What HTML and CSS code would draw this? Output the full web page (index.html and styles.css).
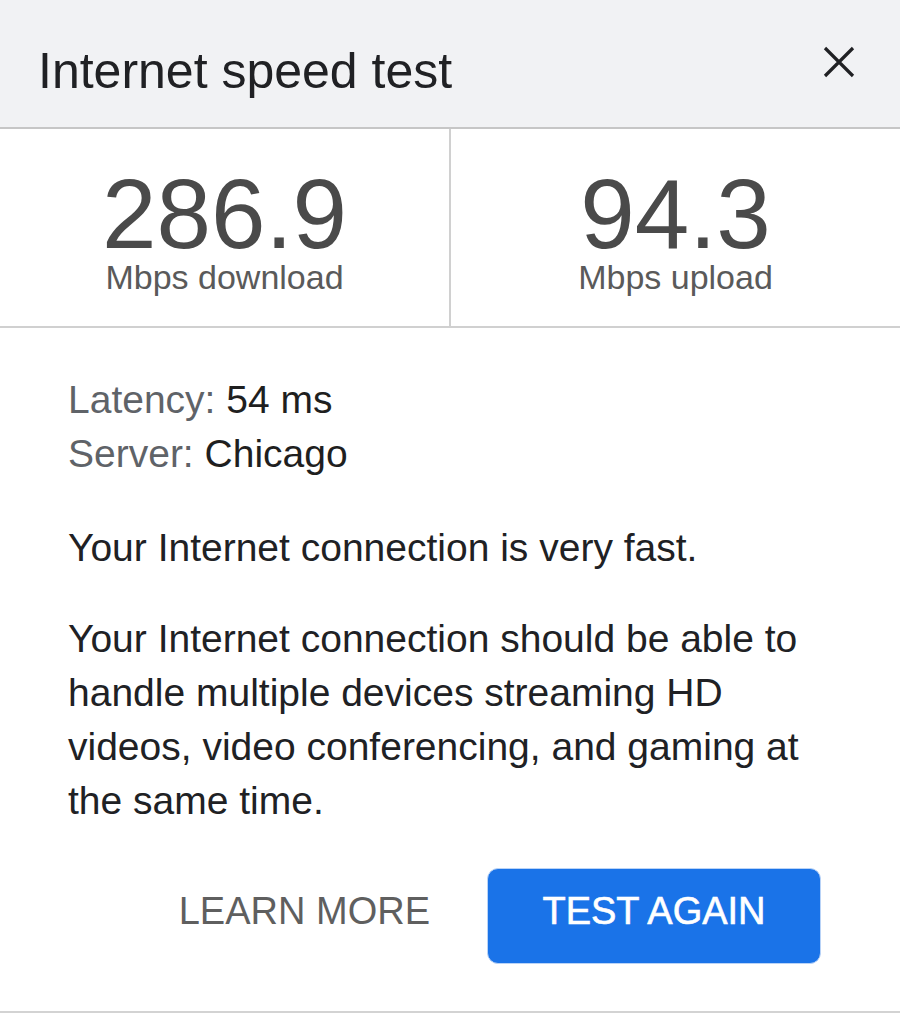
FILE: index.html
```html
<!DOCTYPE html>
<html lang="en">
<head>
<meta charset="utf-8">
<title>Internet speed test</title>
<link rel="stylesheet" href="styles.css">
</head>
<body>
<div class="card">
  <header class="header">
    <h1 class="title">Internet speed test</h1>
    <button class="close" aria-label="Close">
      <svg width="32" height="32" viewBox="0 0 32 32"><path d="M2 2 L30 30 M30 2 L2 30" stroke="#202124" stroke-width="3.2" stroke-linecap="butt" fill="none"/></svg>
    </button>
  </header>
  <section class="stats">
    <div class="stat">
      <div class="num">286.9</div>
      <div class="unit">Mbps download</div>
    </div>
    <div class="stat">
      <div class="num">94.3</div>
      <div class="unit">Mbps upload</div>
    </div>
  </section>
  <section class="details">
    <div class="meta">
      <div><span class="label">Latency:</span> 54 ms</div>
      <div><span class="label">Server:</span> Chicago</div>
    </div>
    <p class="summary">Your Internet connection is very fast.</p>
    <p class="desc">Your Internet connection should be able to handle multiple devices streaming HD videos, video conferencing, and gaming at the same time.</p>
  </section>
  <div class="actions">
    <button class="link">LEARN MORE</button>
    <button class="primary">TEST AGAIN</button>
  </div>
</div>
</body>
</html>
```
FILE: styles.css
```css
html, body {
  margin: 0;
  padding: 0;
  background: #ffffff;
}
body {
  font-family: "Liberation Sans", Arial, sans-serif;
  color: #202124;
}
.card {
  width: 900px;
  border-bottom: 2px solid #d3d3d3;
}
.header {
  height: 127px;
  background: #f1f2f4;
  border-bottom: 2px solid #c6c6c6;
  display: flex;
  align-items: flex-start;
  justify-content: space-between;
}
.title {
  margin: 0;
  padding: 46px 0 0 38px;
  font-size: 50px;
  line-height: 50px;
  font-weight: 400;
  color: #202124;
}
.close {
  margin: 46px 45px 0 0;
  padding: 0;
  border: 0;
  background: transparent;
  width: 32px;
  height: 32px;
  line-height: 0;
}
.stats {
  display: grid;
  grid-template-columns: 449px 1fr;
  border-bottom: 2px solid #d0d0d0;
}
.stat {
  padding: 40px 0 31px;
  text-align: center;
}
.stat + .stat {
  border-left: 2px solid #d0d0d0;
}
.num {
  font-size: 98px;
  line-height: 90px;
  color: #4a4a4a;
}
.unit {
  font-size: 34px;
  line-height: 36px;
  color: #5a5a5a;
}
.details {
  padding: 45px 68px 0;
  font-size: 39px;
  line-height: 54px;
}
.meta {
  color: #1f1f1f;
}
.label {
  color: #5f6368;
}
.summary {
  margin: 40px 0 0;
}
.desc {
  margin: 37px 0 0;
}
.actions {
  display: flex;
  justify-content: flex-end;
  align-items: center;
  gap: 57px;
  padding: 40px 79px 47px 0;
}
.link {
  border: 0;
  background: transparent;
  padding: 0 0 11px;
  font-family: "Liberation Sans", Arial, sans-serif;
  font-size: 38px;
  line-height: 38px;
  color: #5f5f5f;
}
.primary {
  width: 334px;
  height: 96px;
  box-sizing: border-box;
  border: 1px solid #b9d3f7;
  border-radius: 11px;
  background: #1a73e8;
  color: #ffffff;
  font-family: "Liberation Sans", Arial, sans-serif;
  font-size: 38px;
  line-height: 38px;
  padding: 0 0 11px;
  -webkit-text-stroke: 0.6px #ffffff;
}
```
